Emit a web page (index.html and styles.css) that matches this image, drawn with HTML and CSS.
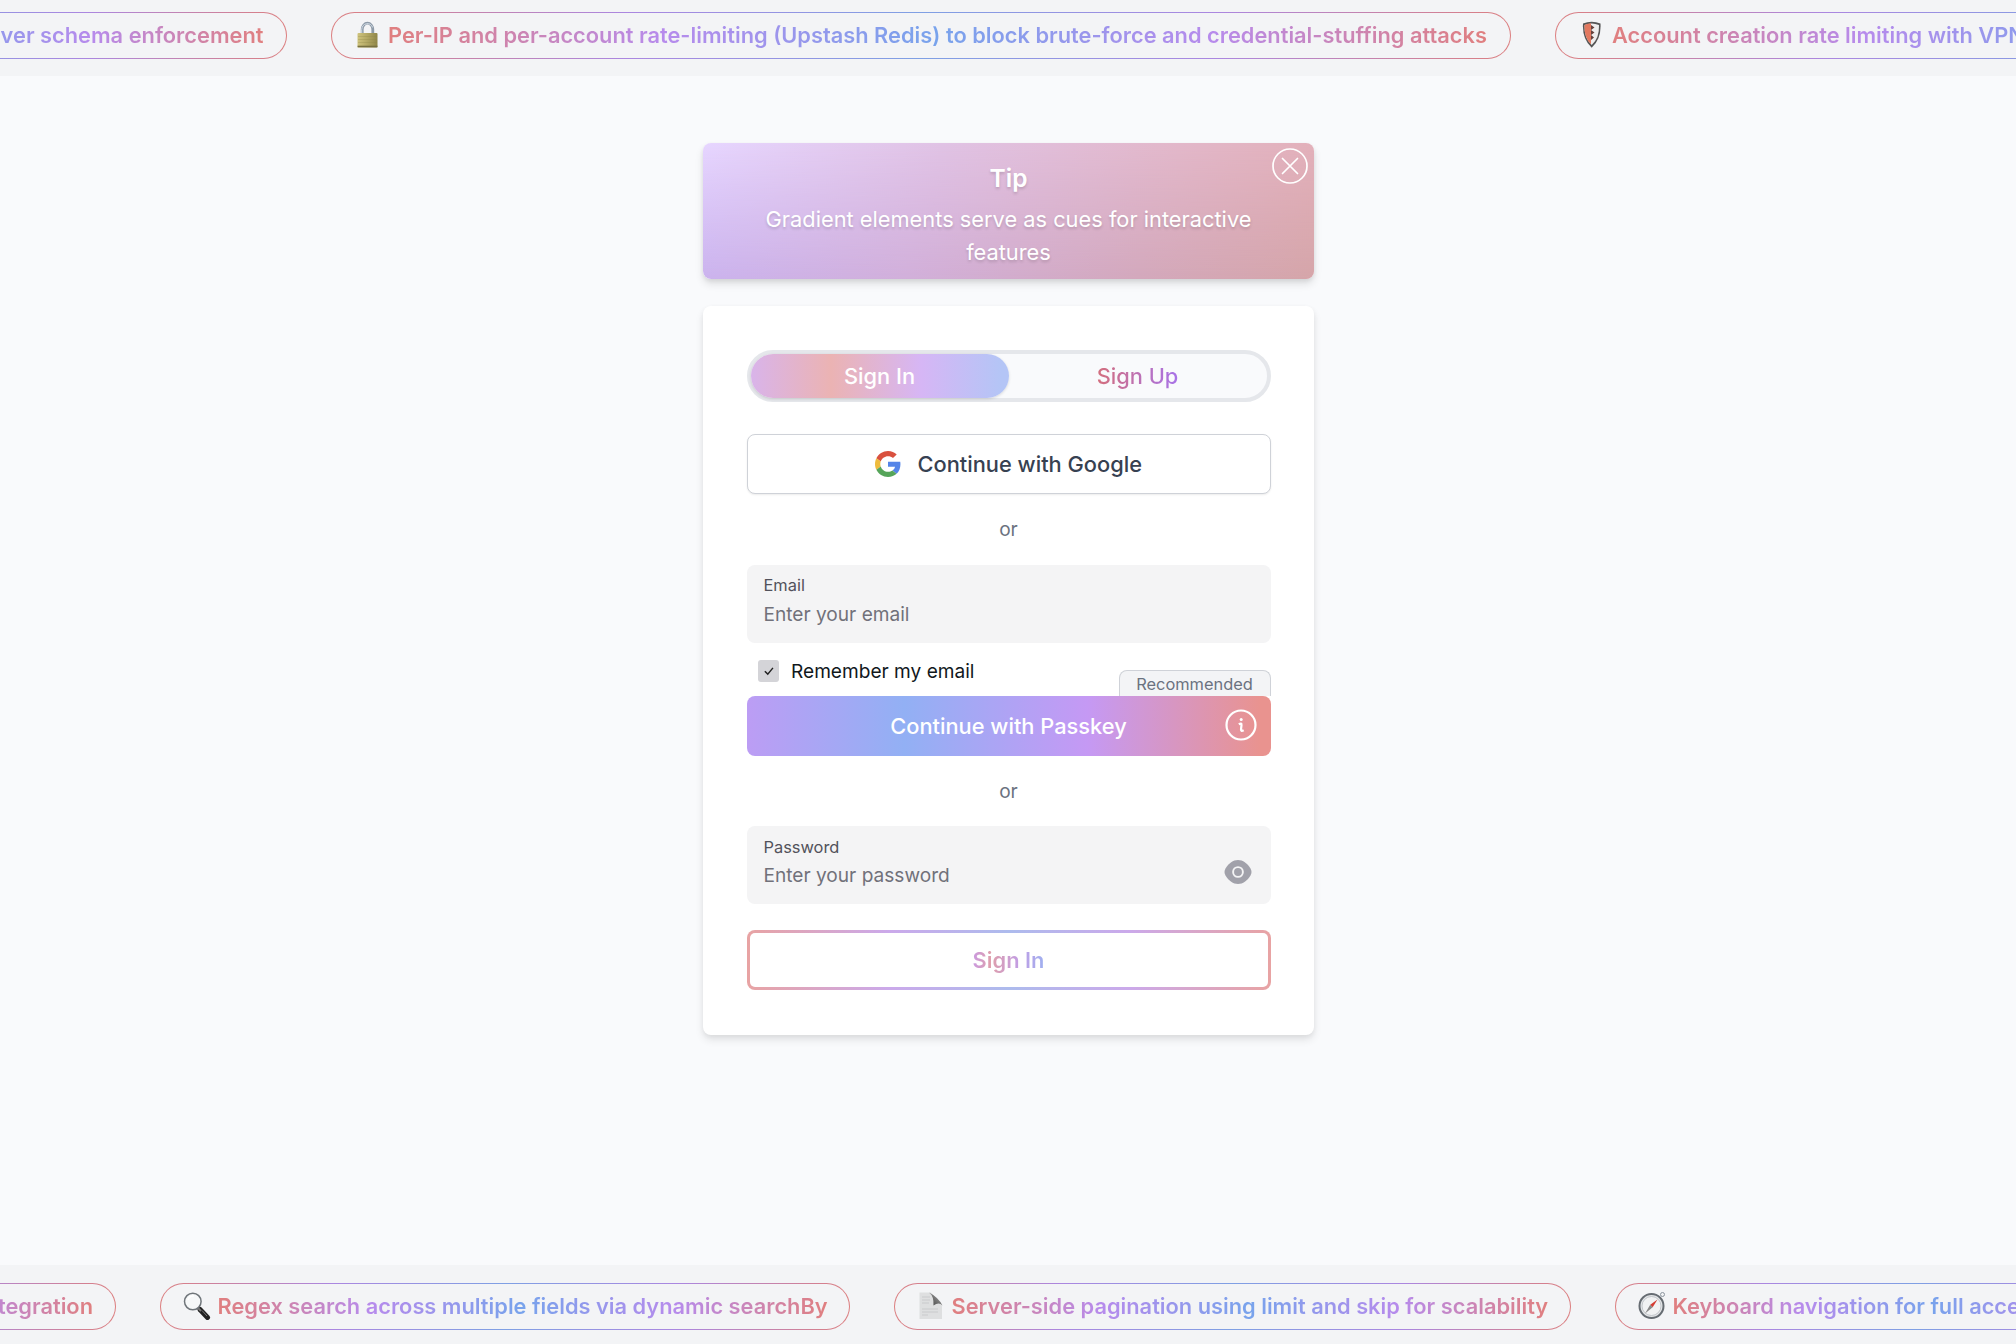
FILE: index.html
```html
<!DOCTYPE html>
<html lang="en">
<head>
<meta charset="utf-8">
<title>Sign In</title>
<link rel="stylesheet" href="styles.css">
</head>
<body>
<div class="page">
  <header class="ticker ticker-top">
    <div class="pill"><span class="pill-text">Zod validation with shared client and server schema enforcement</span></div>
    <div class="pill pill-lock">
      <svg class="emoji" viewBox="0 0 28 28"><defs><linearGradient id="brass" x1="0" x2="1"><stop offset="0" stop-color="#cfc47e"/><stop offset=".45" stop-color="#b5aa66"/><stop offset="1" stop-color="#8f8648"/></linearGradient></defs><path d="M8.200 14V8.500a5.300 6.300 0 0 1 10.600 0V14" fill="none" stroke="#8d9aa8" stroke-width="2.800"/><path d="M7.700 14V8.500a5.800 6.700 0 0 1 11 -2" fill="none" stroke="#d3dde6" stroke-width="1"/><rect x="3.500" y="12" width="20" height="14.500" rx="1" fill="url(#brass)"/><path d="M4 15.500h19M4 18.500h19M4 21.500h19" stroke="#8c8246" stroke-opacity=".35" stroke-width=".8"/><path d="M3.600 25.500h19.800" stroke="#777040" stroke-width="1.600"/></svg>
      <span class="pill-text">Per-IP and per-account rate-limiting (Upstash Redis) to block brute-force and credential-stuffing attacks</span>
    </div>
    <div class="pill">
      <svg class="emoji" viewBox="0 0 28 28"><path d="M5 2.500Q13.500-1 22.500 2.500Q23.500 18 13.700 26.800Q4 18 5 2.500Z" fill="#555"/><path d="M6.500 4Q13.700 1 21 4Q21.500 17 13.700 24Q6 17 6.500 4Z" fill="#eee"/><path d="M6.500 4Q10 2.500 13 2.300V23.300Q6 17 6.500 4Z" fill="#e2785f"/><path d="M13 4l3.500 2.500L13 9l3.500 2.500L13 14l3 2.500-3 2.500z" fill="#65413c"/></svg>
      <span class="pill-text">Account creation rate limiting with VPN and proxy detection to prevent automated signup abuse</span>
    </div>
  </header>

  <main class="content">
    <section class="tip">
      <h2 class="tip-title">Tip</h2>
      <p class="tip-copy">Gradient elements serve as cues for interactive features</p>
      <button class="tip-close" aria-label="Close"><svg viewBox="0 0 36 36"><circle cx="18" cy="18" r="17" /><path d="M10.500 10.500l15 15M25.500 10.500l-15 15"/></svg></button>
    </section>

    <section class="card">
      <div class="tabs">
        <button class="tab tab-active">Sign In</button>
        <button class="tab"><span class="tab-label">Sign Up</span></button>
      </div>

      <button class="google">
        <svg class="google-logo" viewBox="0 0 48 48"><path fill="#d9513f" d="M24 9.500c3.540 0 6.710 1.220 9.210 3.600l6.850-6.850C35.900 2.380 30.470 0 24 0 14.620 0 6.510 5.380 2.560 13.220l7.980 6.190C12.430 13.720 17.740 9.500 24 9.500z"/><path fill="#5585e8" d="M46.980 24.550c0-1.570-.15-3.090-.38-4.550H24v9.020h12.940c-.58 2.960-2.260 5.480-4.780 7.180l7.730 6c4.510-4.180 7.090-10.360 7.090-17.650z"/><path fill="#eebb3d" d="M10.530 28.590c-.48-1.450-.76-2.990-.76-4.590s.27-3.140.76-4.590l-7.980-6.190C.92 16.460 0 20.120 0 24s.92 7.540 2.560 10.780l7.970-6.190z"/><path fill="#56a55a" d="M24 48c6.480 0 11.930-2.130 15.890-5.810l-7.730-6c-2.150 1.450-4.920 2.300-8.160 2.300-6.260 0-11.570-4.220-13.470-9.910l-7.980 6.190C6.510 42.620 14.620 48 24 48z"/></svg>
        <span>Continue with Google</span>
      </button>

      <div class="or">or</div>

      <label class="field">
        <span class="field-label">Email</span>
        <input class="field-input" type="email" placeholder="Enter your email">
      </label>

      <div class="options">
        <label class="remember">
          <span class="check"><svg viewBox="0 0 22 22"><path d="M7 11.200l3 3L15.300 7.800"/></svg></span>
          <span>Remember my email</span>
        </label>
        <span class="recommended">Recommended</span>
      </div>

      <button class="passkey">
        <span>Continue with Passkey</span>
        <svg class="info" viewBox="0 0 32 32"><circle cx="16" cy="16" r="14.500"/><circle class="dot" cx="16.200" cy="10.400" r="1.500"/><path d="M13.800 15.300Q16.800 13.600 16.500 16L16 20.500Q16 22.800 18.700 21.300"/></svg>
      </button>

      <div class="or">or</div>

      <label class="field">
        <span class="field-label">Password</span>
        <input class="field-input" type="password" placeholder="Enter your password">
        <svg class="eye" viewBox="0 0 28 24"><path d="M14 0C19 0 23 3 26.500 8.500Q28.500 12 26.500 15.500C23 21 19 24 14 24S5 21 1.500 15.500Q-.5 12 1.500 8.500C5 3 9 0 14 0Z" fill="#a1a1aa"/><circle cx="14" cy="12" r="4.900" fill="none" stroke="#f4f4f5" stroke-width="1.900"/></svg>
      </label>

      <button class="submit"><span class="submit-label">Sign In</span></button>
    </section>
  </main>

  <footer class="ticker ticker-bottom">
    <div class="pill"><span class="pill-text">Cloud storage and transactional email integration</span></div>
    <div class="pill pill-search">
      <svg class="emoji" viewBox="0 0 28 28"><path d="M17 17.500l7.500 8" stroke="#222" stroke-width="5" stroke-linecap="round"/><path d="M14 15l4 4" stroke="#777" stroke-width="2"/><circle cx="9.800" cy="9.500" r="8.300" fill="#f6f8f9" stroke="#6f757a" stroke-width="1.500"/><path d="M5 8a5.500 5.500 0 0 1 6-4" stroke="#fff" fill="none" stroke-width="1.500"/><path d="M19 18.500l5 5.500" stroke="#777" stroke-width="1"/></svg>
      <span class="pill-text">Regex search across multiple fields via dynamic searchBy</span>
    </div>
    <div class="pill pill-page">
      <svg class="emoji" viewBox="0 0 28 28"><defs><linearGradient id="curl" x1="1" y1="0" x2="0" y2="1"><stop offset="0" stop-color="#aaa"/><stop offset="1" stop-color="#444"/></linearGradient></defs><path d="M2.500 .5H14L25 13V27H2.500Z" fill="#dedfe0"/><path d="M12 .5Q17 4 16.500 13.500Q22 9.500 25.500 13.500Q21 5 12 .5Z" fill="url(#curl)"/><path d="M5 5h8M5 8h8M5 11h7M5 17h16M5 20h16M5 23h6" stroke="#c9cacc" stroke-width="1"/></svg>
      <span class="pill-text">Server-side pagination using limit and skip for scalability</span>
    </div>
    <div class="pill">
      <svg class="emoji" viewBox="0 0 28 28"><circle cx="24.500" cy="2.500" r="2" fill="none" stroke="#8b949d" stroke-width="1"/><circle cx="13.500" cy="14" r="12" fill="#e4e6e8" stroke="#666c72" stroke-width="2"/><circle cx="13.500" cy="14" r="9.500" fill="#f1f2f3" stroke="#b9bdc1" stroke-width=".8"/><path d="M19.500 7.500L12.200 12.800L14.700 15.300Z" fill="#d43c32"/><path d="M12.200 12.800L7 21.500L14.700 15.300Z" fill="#888"/></svg>
      <span class="pill-text">Keyboard navigation for full accessibility support</span>
    </div>
  </footer>
</div>
</body>
</html>
```
FILE: styles.css
```css
html { font-size: 21.82px; }
* { box-sizing: border-box; }
body {
  margin: 0;
  background: #f9fafc;
  font-family: Inter, "Liberation Sans", sans-serif;
  overflow: hidden;
}
button { font: inherit; border: 0; padding: 0; margin: 0; }

.page { height: 1344px; display: flex; flex-direction: column; overflow: hidden; }

/* scrolling feature strips */
.ticker {
  display: flex;
  flex: none;
  gap: 44px;
  background: #f3f4f6;
  overflow: hidden;
}
.ticker-top { height: 76px; padding-top: 12px; }
.ticker-bottom { height: 79px; padding-top: 17.500px; }
.pill {
  flex: none;
  display: flex;
  align-items: center;
  gap: 6.500px;
  height: 47px;
  padding: 0 22px 1px;
  border: 1px solid transparent;
  border-radius: 24px;
  background:
    linear-gradient(#f3f4f6, #f3f4f6) padding-box,
    linear-gradient(90deg, #dc7f80, #ab87e0, #7fa0e4, #ab87e0, #dc7f80) border-box;
}
.pill-lock { width: 1180px; }
.pill-search { width: 690px; }
.pill-page { width: 677px; }
.ticker .pill:first-child { justify-content: flex-end; }
.ticker-top .pill:first-child { width: 800px; margin-left: -513.500px; }
.ticker-bottom .pill:first-child { width: 640px; margin-left: -524px; }
.emoji { width: 28px; height: 28px; flex: none; }
.pill-text {
  font-weight: 600;
  white-space: nowrap;
  color: transparent;
  background: linear-gradient(90deg, #e07f7f, #b78bec, #78a3ec, #b78bec, #e07f7f);
  background-clip: text;
  -webkit-background-clip: text;
}

.content {
  flex: 1;
  display: flex;
  flex-direction: column;
  align-items: center;
  padding: 67px 0 0 1px;
  gap: 27px;
}

/* tip banner: two horizontal blends, the darker one fading in downwards */
.tip {
  position: relative;
  isolation: isolate;
  width: 611px;
  height: 136px;
  padding: 17px 44px 0;
  border-radius: 8px;
  text-align: center;
  color: #fff;
  background: linear-gradient(97deg, #e7d6ff, #e1c3e5 38%, #e3b8ca 76%, #e3b0b9);
  box-shadow: 0 5px 8px rgba(0, 0, 0, .11), 0 2px 4px rgba(0, 0, 0, .07);
  text-shadow: 0 2px 3px rgba(0, 0, 0, .16);
}
.tip::before {
  content: "";
  position: absolute;
  inset: 0;
  z-index: -1;
  border-radius: 8px;
  background: linear-gradient(97deg, #cab3ef, #d1afda 35%, #d3a8bc 72%, #d5a5a9);
  mask-image: linear-gradient(transparent, #000);
  -webkit-mask-image: linear-gradient(transparent, #000);
}
.tip-title { margin: 0; font-size: 24.500px; line-height: 36px; font-weight: 600; }
.tip-copy { margin: 7px 0 0; font-size: 21.820px; line-height: 33px; }
.tip-close {
  position: absolute;
  right: 6px;
  top: 5px;
  width: 36px;
  height: 36px;
  background: none;
}
.tip-close svg { display: block; width: 36px; height: 36px; fill: none; stroke: #fff; stroke-width: 1.700; stroke-linecap: round; }

.card {
  width: 611px;
  height: 728.500px;
  padding: 43.500px;
  display: flex;
  flex-direction: column;
  background: #fff;
  border-radius: 8px;
  box-shadow: 0 5px 8px rgba(0, 0, 0, .09), 0 2px 5px rgba(0, 0, 0, .05);
}

.tabs {
  flex: none;
  display: grid;
  grid-template-columns: 1fr 1fr;
  height: 52px;
  border: 4px solid #e5e7eb;
  border-radius: 26px;
  background: #f9fafc;
}
.tab { background: none; border-radius: 22px; font-weight: 500; }
.tab-active {
  color: #fff;
  background: linear-gradient(90deg, #d9b4ea, #ebb3b3 31%, #d6b6f5 66%, #b4c5f6 97%);
  box-shadow: 0 1px 3px rgba(0, 0, 0, .14);
}
.tab-label, .submit-label {
  color: transparent;
  background-clip: text;
  -webkit-background-clip: text;
}
.tab-label { background-image: linear-gradient(90deg, #d36e7d, #a873e8); }

.google {
  flex: none;
  display: flex;
  align-items: center;
  justify-content: center;
  gap: 16.500px;
  height: 60px;
  margin-top: 32.500px;
  padding-bottom: 1px;
  border: 1px solid #cfd2d8;
  border-radius: 8px;
  background: #fff;
  color: #374151;
  font-weight: 500;
  box-shadow: 0 1px 2px rgba(0, 0, 0, .08);
}
.google-logo { width: 26px; height: 26px; }

.or {
  flex: none;
  height: 70.500px;
  line-height: 70.500px;
  text-align: center;
  font-size: 19.100px;
  color: #6b7280;
}

.field {
  position: relative;
  flex: none;
  display: flex;
  flex-direction: column;
  height: 78px;
  padding: 10.500px 17px 0;
  border-radius: 8px;
  background: #f4f4f5;
}
.field-label { font-size: 16.400px; line-height: 20px; color: #52525b; }
.field-input {
  width: 100%;
  height: 28px;
  margin-top: 4.500px;
  padding: 0;
  border: 0;
  outline: 0;
  background: none;
  font: inherit;
  font-size: 19.100px;
}
.field-input::placeholder { color: #71717a; opacity: 1; }
.eye { position: absolute; right: 19px; top: 33.500px; width: 28px; height: 24px; }

.options {
  flex: none;
  display: flex;
  align-items: flex-end;
  justify-content: space-between;
  height: 53px;
  padding-left: 11px;
}
.remember { display: flex; align-items: center; gap: 12px; height: 22px; margin-bottom: 14px; font-size: 19.100px; color: #11181c; }
.check { width: 21.500px; height: 22px; border-radius: 3px; background: #d4d4d8; }
.check svg { display: block; width: 100%; height: 100%; fill: none; stroke: #222; stroke-width: 1.500; }
.recommended {
  width: 152px;
  height: 26px;
  border: 1px solid #cfd2d8;
  border-bottom: 0;
  border-radius: 8px 8px 0 0;
  background: #f3f4f6;
  color: #6b7280;
  text-align: center;
  font-size: 16.400px;
  line-height: 27px;
}

.passkey {
  position: relative;
  flex: none;
  height: 60px;
  border-radius: 8px;
  color: #fff;
  font-weight: 500;
  background: linear-gradient(90deg, #bc9df4, #92b0f4 30%, #c599f4 65%, #e9938f 98%);
}
.info {
  position: absolute;
  right: 14px;
  top: 13.500px;
  width: 32px;
  height: 32px;
  fill: none;
  stroke: #fff;
  stroke-width: 2.200;
}
.info .dot { fill: #fff; stroke: none; }

.submit {
  flex: none;
  height: 60px;
  margin-top: 25.500px;
  border: 3px solid transparent;
  border-radius: 8px;
  font-weight: 600;
  background:
    linear-gradient(#fff, #fff) padding-box,
    linear-gradient(90deg, #e8a3a3, #cba9ea 27%, #adbbed 50%, #cba9ea 73%, #e8a3a3) border-box;
}
.submit-label { background-image: linear-gradient(90deg, #ca9ae0, #df9fab 25%, #c29de4 65%, #a0b0f0); }
```
